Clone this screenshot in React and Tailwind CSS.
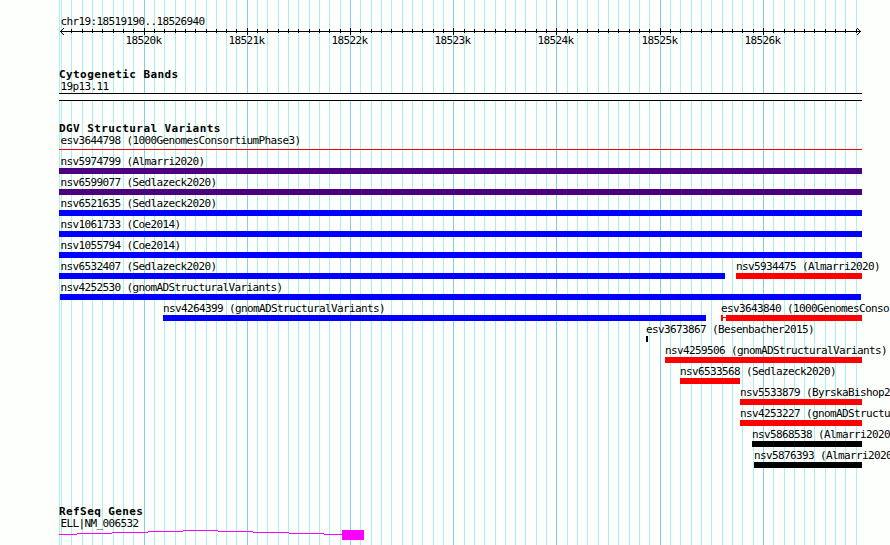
const MINOR = [
  59, 61, 71, 82, 92, 102, 113, 123, 133, 154, 164, 175, 185, 195, 206, 216, 226, 236,
  257, 267, 278, 288, 298, 309, 319, 329, 340, 360, 371, 381, 391, 402, 412, 422, 433, 443,
  464, 474, 484, 495, 505, 515, 525, 536, 546, 567, 577, 587, 598, 608, 618, 629, 639, 649,
  670, 680, 691, 701, 711, 722, 732, 742, 753, 773, 784, 794, 804, 814, 825, 835, 845, 856,
];

const MAJOR = [
  { x: 144, label: '18520k' },
  { x: 247, label: '18521k' },
  { x: 350, label: '18522k' },
  { x: 453, label: '18523k' },
  { x: 556, label: '18524k' },
  { x: 660, label: '18525k' },
  { x: 763, label: '18526k' },
];

const LEFT = 59;
const RIGHT = 862;

const rows = [
  [{ name: 'esv3644798 (1000GenomesConsortiumPhase3)', start: LEFT, end: RIGHT, color: 'bg-[#ff0000]', thin: true }],
  [{ name: 'nsv5974799 (Almarri2020)', start: LEFT, end: RIGHT, color: 'bg-[#4b0082]' }],
  [{ name: 'nsv6599077 (Sedlazeck2020)', start: LEFT, end: RIGHT, color: 'bg-[#4b0082]' }],
  [{ name: 'nsv6521635 (Sedlazeck2020)', start: LEFT, end: RIGHT, color: 'bg-[#0000ff]' }],
  [{ name: 'nsv1061733 (Coe2014)', start: LEFT, end: RIGHT, color: 'bg-[#0000ff]' }],
  [{ name: 'nsv1055794 (Coe2014)', start: LEFT, end: RIGHT, color: 'bg-[#0000ff]' }],
  [
    { name: 'nsv6532407 (Sedlazeck2020)', start: LEFT, end: 725, color: 'bg-[#0000ff]' },
    { name: 'nsv5934475 (Almarri2020)', start: 736, end: RIGHT, color: 'bg-[#ff0000]' },
  ],
  [{ name: 'nsv4252530 (gnomADStructuralVariants)', start: 60, end: 861, color: 'bg-[#0000ff]' }],
  [
    { name: 'nsv4264399 (gnomADStructuralVariants)', start: 163, end: 706, color: 'bg-[#0000ff]' },
    { name: 'esv3643840 (1000GenomesConsortiumPhase3)', start: 721, end: RIGHT, color: 'bg-[#ff0000]', whisker: true },
  ],
  [{ name: 'esv3673867 (Besenbacher2015)', start: 646, end: 648, color: 'bg-black' }],
  [{ name: 'nsv4259506 (gnomADStructuralVariants)', start: 665, end: RIGHT, color: 'bg-[#ff0000]' }],
  [{ name: 'nsv6533568 (Sedlazeck2020)', start: 680, end: 740, color: 'bg-[#ff0000]' }],
  [{ name: 'nsv5533879 (ByrskaBishop2021)', start: 740, end: RIGHT, color: 'bg-[#ff0000]' }],
  [{ name: 'nsv4253227 (gnomADStructuralVariants)', start: 740, end: RIGHT, color: 'bg-[#ff0000]' }],
  [{ name: 'nsv5868538 (Almarri2020)', start: 752, end: RIGHT, color: 'bg-black' }],
  [{ name: 'nsv5876393 (Almarri2020)', start: 754, end: RIGHT, color: 'bg-black' }],
];

function Gridlines() {
  return (
    <svg className="absolute inset-0" width="890" height="545" shapeRendering="crispEdges">
      {MINOR.map((x) => (
        <rect key={x} x={x} y="0" width="1" height="545" fill="#afeeee" />
      ))}
      {MAJOR.map(({ x }) => (
        <rect key={x} x={x} y="0" width="1" height="545" fill="#87ceeb" />
      ))}
    </svg>
  );
}

function Ruler() {
  return (
    <svg className="block h-[8px] w-[890px]" viewBox="0 0 890 8" shapeRendering="crispEdges">
      <rect x="60" y="3" width="801" height="1" />
      {MINOR.slice(2).map((x) => (
        <rect key={x} x={x} y="1" width="1" height="4" />
      ))}
      {MAJOR.map(({ x }) => (
        <rect key={x} x={x} y="0" width="1" height="7" />
      ))}
      {[1, 2, 3].map((d) => (
        <g key={d}>
          <rect x={60 + d} y={3 - d} width="1" height="1" />
          <rect x={60 + d} y={3 + d} width="1" height="1" />
          <rect x={860 - d} y={3 - d} width="1" height="1" />
          <rect x={860 - d} y={3 + d} width="1" height="1" />
        </g>
      ))}
    </svg>
  );
}

function Heading({ children }) {
  return <h2 className="h-[13px] pl-[59px] font-bold leading-[13px] tracking-[0.41px]">{children}</h2>;
}

function Bar({ item }) {
  if (item.thin) return <div className={`mt-[2px] h-px ${item.color}`} />;
  if (item.whisker) {
    return (
      <div className="flex h-[6px]">
        <div className={`w-[2px] ${item.color}`} />
        <div className={`mt-[2px] h-px w-[3px] ${item.color}`} />
        <div className={`flex-1 ${item.color}`} />
      </div>
    );
  }
  return <div className={`h-[6px] ${item.color}`} />;
}

function Row({ items }) {
  return (
    <div className="flex h-[21px]">
      {items.map((item, i) => {
        const prev = i === 0 ? 0 : items[i - 1].end;
        // labels never start left of x = 60.5
        const indent = Math.max(0, 60.5 - item.start);
        return (
          <div
            key={item.name}
            className="shrink-0"
            style={{ marginLeft: item.start - prev, width: item.end - item.start }}
          >
            <p className="h-[15px] whitespace-nowrap leading-[17px]" style={{ marginLeft: indent }}>
              {item.name}
            </p>
            <Bar item={item} />
          </div>
        );
      })}
    </div>
  );
}

export default function App() {
  return (
    <div className="relative h-[545px] w-[890px] overflow-hidden bg-[#fdfffc] font-['DejaVu_Sans_Mono',monospace] text-[11px] tracking-[-0.62px] text-black">
      <Gridlines />
      <div className="relative">
        <p className="h-[28px] pl-[60.5px] pt-[15px] leading-[14px]">chr19:18519190..18526940</p>
        <Ruler />
        <div className="flex h-[13px] pl-[125.5px]">
          {MAJOR.map(({ x, label }, i) => (
            <span
              key={x}
              className="shrink-0 leading-[10px]"
              style={{ width: i < MAJOR.length - 1 ? MAJOR[i + 1].x - x : 60 }}
            >
              {label}
            </span>
          ))}
        </div>

        <section className="pt-[19px]">
          <Heading>Cytogenetic Bands</Heading>
          <p className="h-[12px] pl-[60.5px] leading-[12px]">19p13.11</p>
          <div className="ml-[59px] h-[8px] w-[803px] border-y border-black bg-[#fdfffc]" />
        </section>

        <section className="pt-[21px]">
          <Heading>DGV Structural Variants</Heading>
          <div className="-mt-[3px]">
            {rows.map((items) => (
              <Row key={items[0].name} items={items} />
            ))}
          </div>
        </section>

        <section className="pt-[37px]">
          <Heading>RefSeq Genes</Heading>
          <p className="h-[12px] pl-[60.5px] leading-[12px]">ELL|NM_006532</p>
          <svg className="block h-[12px] w-[890px]" viewBox="0 0 890 12" shapeRendering="crispEdges" fill="#ff00ff">
            <rect x="59" y="4" width="18" height="1" />
            <rect x="77" y="3" width="35" height="1" />
            <rect x="112" y="2" width="36" height="1" />
            <rect x="148" y="1" width="35" height="1" />
            <rect x="183" y="0" width="35" height="1" />
            <rect x="218" y="1" width="35" height="1" />
            <rect x="253" y="2" width="36" height="1" />
            <rect x="289" y="3" width="35" height="1" />
            <rect x="324" y="4" width="18" height="1" />
            <rect x="342" y="0" width="22" height="10" />
          </svg>
        </section>
      </div>
    </div>
  );
}
